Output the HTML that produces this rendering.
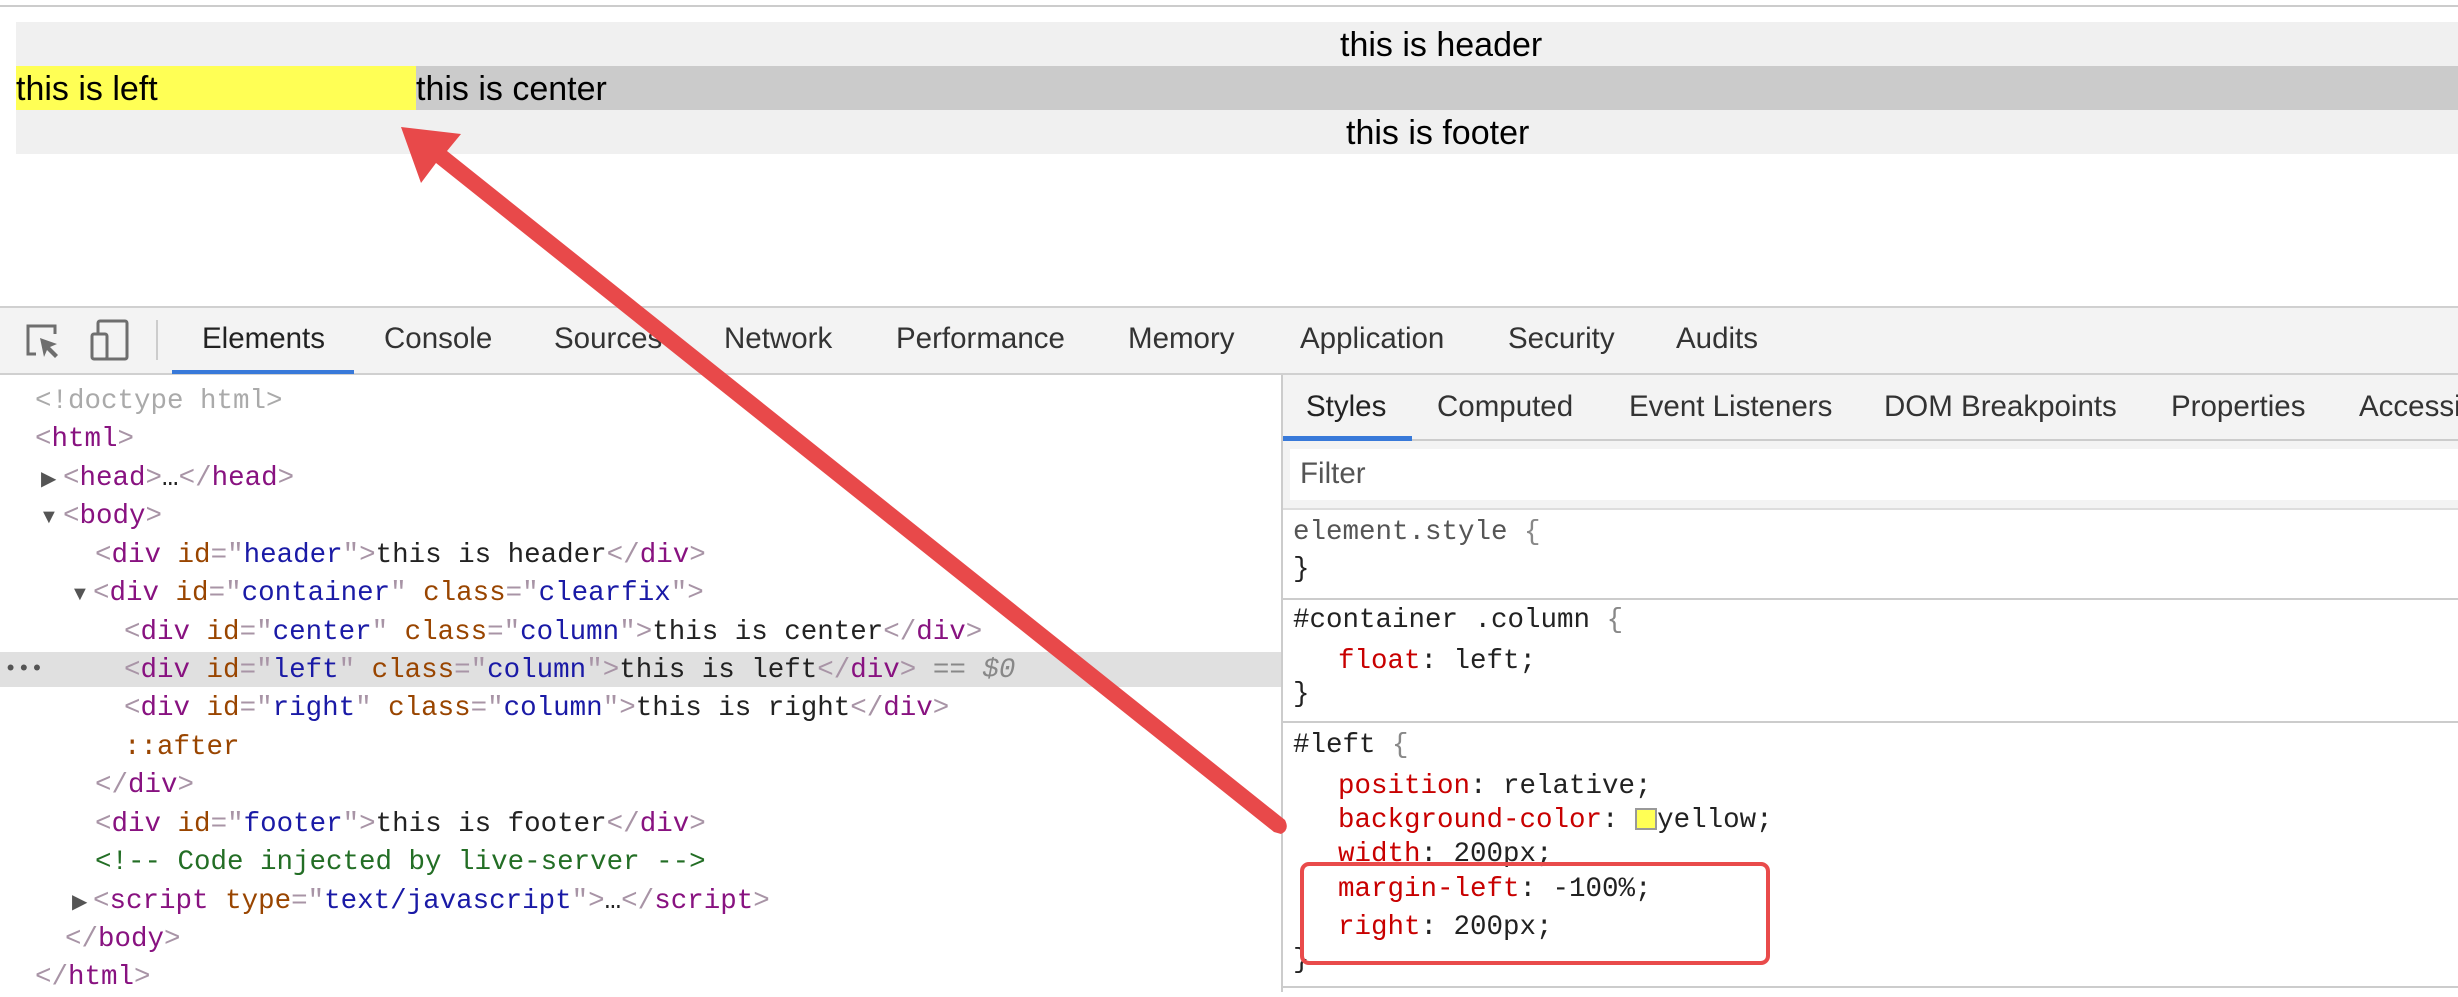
<!DOCTYPE html>
<html><head><meta charset="utf-8">
<style>
*{margin:0;padding:0;box-sizing:border-box}
body{width:2458px;height:992px;overflow:hidden;background:#fff;position:relative;font-family:"Liberation Sans",sans-serif}
.a{position:absolute;white-space:pre}
.m{font-family:"Liberation Mono","DejaVu Sans Mono",monospace;font-size:27.5px;line-height:38px;color:#222}
.t{color:#881280}.b{color:#a894a6}.n{color:#994500}.v{color:#1a1aa6}.c{color:#236e25}.g{color:#aaa}.p{color:#c80000}.k{color:#888}
.tab{position:absolute;font-size:29.5px;color:#333;top:321px;line-height:36px}
.st{position:absolute;font-size:29.5px;color:#333;top:389px;line-height:36px}
.ar{position:absolute;font-size:20px;color:#555;line-height:38px}
.pg{position:absolute;font-size:34px;line-height:44px;color:#000;white-space:pre}
</style></head><body>
<div class="a" style="left:0;top:5px;width:2458px;height:2px;background:#ccc"></div>
<div class="a" style="left:16px;top:22px;width:2442px;height:44px;background:#f0f0f0"></div>
<div class="a" style="left:16px;top:66px;width:2442px;height:44px;background:#cbcbcb"></div>
<div class="a" style="left:16px;top:66px;width:400px;height:44px;background:#ffff55"></div>
<div class="a" style="left:16px;top:110px;width:2442px;height:44px;background:#f0f0f0"></div>
<div class="pg" style="left:1340px;top:23px">this is header</div>
<div class="pg" style="left:16px;top:67px">this is left</div>
<div class="pg" style="left:416px;top:67px">this is center</div>
<div class="pg" style="left:1346px;top:111px">this is footer</div>

<div class="a" style="left:0;top:306px;width:2458px;height:69px;background:#f3f3f3;border-top:2px solid #d0d0d0;border-bottom:2px solid #d0d0d0"></div>
<svg class="a" style="left:0;top:306px" width="170" height="69" viewBox="0 306 170 69">
<path d="M36 354 H28 V326 H55 V334" fill="none" stroke="#6e6e6e" stroke-width="3"/>
<path d="M40 338 L57 344 L50 347 L58 355 L55 358 L47 350 L44 357 Z" fill="#6e6e6e"/>
<rect x="98" y="321" width="29" height="38" rx="2" fill="none" stroke="#6e6e6e" stroke-width="3"/>
<rect x="92" y="334" width="15" height="25" rx="2" fill="#f3f3f3" stroke="#6e6e6e" stroke-width="3"/>
<rect x="156" y="320" width="2" height="40" fill="#ccc"/>
</svg>
<div class="a" style="left:172px;top:370px;width:182px;height:4px;background:#3879d9"></div>
<div class="tab" style="left:202px;color:#222">Elements</div>
<div class="tab" style="left:384px">Console</div>
<div class="tab" style="left:554px">Sources</div>
<div class="tab" style="left:724px">Network</div>
<div class="tab" style="left:896px">Performance</div>
<div class="tab" style="left:1128px">Memory</div>
<div class="tab" style="left:1300px">Application</div>
<div class="tab" style="left:1508px">Security</div>
<div class="tab" style="left:1676px">Audits</div>

<div class="a" style="left:0;top:652px;width:1281px;height:35px;background:#e0e0e0"></div>
<div class="a m" style="left:4px;top:651px;font-size:22px;color:#555">•••</div>

<div class="a m" style="left:35px;top:383px"><span class="g">&lt;!doctype html&gt;</span></div>
<div class="a m" style="left:35px;top:421px"><span class="b">&lt;</span><span class="t">html</span><span class="b">&gt;</span></div>
<div class="ar" style="left:41px;top:460px">▶</div>
<div class="a m" style="left:63px;top:460px"><span class="b">&lt;</span><span class="t">head</span><span class="b">&gt;</span>…<span class="b">&lt;/</span><span class="t">head</span><span class="b">&gt;</span></div>
<div class="ar" style="left:39px;top:498px">▼</div>
<div class="a m" style="left:63px;top:498px"><span class="b">&lt;</span><span class="t">body</span><span class="b">&gt;</span></div>
<div class="a m" style="left:95px;top:537px"><span class="b">&lt;</span><span class="t">div</span> <span class="n">id</span><span class="b">="</span><span class="v">header</span><span class="b">"&gt;</span>this is header<span class="b">&lt;/</span><span class="t">div</span><span class="b">&gt;</span></div>
<div class="ar" style="left:70px;top:575px">▼</div>
<div class="a m" style="left:93px;top:575px"><span class="b">&lt;</span><span class="t">div</span> <span class="n">id</span><span class="b">="</span><span class="v">container</span><span class="b">"</span> <span class="n">class</span><span class="b">="</span><span class="v">clearfix</span><span class="b">"&gt;</span></div>
<div class="a m" style="left:124px;top:614px"><span class="b">&lt;</span><span class="t">div</span> <span class="n">id</span><span class="b">="</span><span class="v">center</span><span class="b">"</span> <span class="n">class</span><span class="b">="</span><span class="v">column</span><span class="b">"&gt;</span>this is center<span class="b">&lt;/</span><span class="t">div</span><span class="b">&gt;</span></div>
<div class="a m" style="left:124px;top:652px"><span class="b">&lt;</span><span class="t">div</span> <span class="n">id</span><span class="b">="</span><span class="v">left</span><span class="b">"</span> <span class="n">class</span><span class="b">="</span><span class="v">column</span><span class="b">"&gt;</span>this is left<span class="b">&lt;/</span><span class="t">div</span><span class="b">&gt;</span> <span class="k">== <i>$0</i></span></div>
<div class="a m" style="left:124px;top:690px"><span class="b">&lt;</span><span class="t">div</span> <span class="n">id</span><span class="b">="</span><span class="v">right</span><span class="b">"</span> <span class="n">class</span><span class="b">="</span><span class="v">column</span><span class="b">"&gt;</span>this is right<span class="b">&lt;/</span><span class="t">div</span><span class="b">&gt;</span></div>
<div class="a m" style="left:124px;top:729px"><span class="n">::after</span></div>
<div class="a m" style="left:95px;top:767px"><span class="b">&lt;/</span><span class="t">div</span><span class="b">&gt;</span></div>
<div class="a m" style="left:95px;top:806px"><span class="b">&lt;</span><span class="t">div</span> <span class="n">id</span><span class="b">="</span><span class="v">footer</span><span class="b">"&gt;</span>this is footer<span class="b">&lt;/</span><span class="t">div</span><span class="b">&gt;</span></div>
<div class="a m" style="left:95px;top:844px"><span class="c">&lt;!-- Code injected by live-server --&gt;</span></div>
<div class="ar" style="left:72px;top:883px">▶</div>
<div class="a m" style="left:93px;top:883px"><span class="b">&lt;</span><span class="t">script</span> <span class="n">type</span><span class="b">="</span><span class="v">text/javascript</span><span class="b">"&gt;</span>…<span class="b">&lt;/</span><span class="t">script</span><span class="b">&gt;</span></div>
<div class="a m" style="left:65px;top:921px"><span class="b">&lt;/</span><span class="t">body</span><span class="b">&gt;</span></div>
<div class="a m" style="left:35px;top:959px"><span class="b">&lt;/</span><span class="t">html</span><span class="b">&gt;</span></div>

<div class="a" style="left:1281px;top:375px;width:2px;height:617px;background:#ccc"></div>
<div class="a" style="left:1283px;top:375px;width:1175px;height:66px;background:#f3f3f3;border-bottom:2px solid #ccc"></div>
<div class="a" style="left:1283px;top:436px;width:129px;height:5px;background:#3879d9"></div>
<div class="st" style="left:1306px;color:#222">Styles</div>
<div class="st" style="left:1437px">Computed</div>
<div class="st" style="left:1629px">Event Listeners</div>
<div class="st" style="left:1884px">DOM Breakpoints</div>
<div class="st" style="left:2171px">Properties</div>
<div class="st" style="left:2359px">Accessibility</div>
<div class="a" style="left:1283px;top:441px;width:1175px;height:69px;background:#f3f3f3;border-bottom:2px solid #ddd"></div>
<div class="a" style="left:1290px;top:449px;width:1168px;height:51px;background:#fff"></div>
<div class="a" style="left:1300px;top:456px;font-size:29.5px;line-height:36px;color:#555">Filter</div>
<div class="a m" style="left:1293px;top:514px;color:#555">element.style <span class="k">{</span></div>
<div class="a m" style="left:1293px;top:551px">}</div>
<div class="a" style="left:1283px;top:598px;width:1175px;height:2px;background:#ccc"></div>
<div class="a m" style="left:1293px;top:602px">#container .column <span class="k">{</span></div>
<div class="a m" style="left:1338px;top:643px"><span class="p">float</span>: left;</div>
<div class="a m" style="left:1293px;top:676px">}</div>
<div class="a" style="left:1283px;top:721px;width:1175px;height:2px;background:#ccc"></div>
<div class="a m" style="left:1293px;top:727px">#left <span class="k">{</span></div>
<div class="a m" style="left:1338px;top:768px"><span class="p">position</span>: relative;</div>
<div class="a m" style="left:1338px;top:802px"><span class="p">background-color</span>: <span style="display:inline-block;width:22px;height:22px;background:#ffff55;border:2px solid #999;vertical-align:-3px"></span>yellow;</div>
<div class="a m" style="left:1338px;top:836px"><span class="p">width</span>: 200px;</div>
<div class="a m" style="left:1338px;top:871px"><span class="p">margin-left</span>: -100%;</div>
<div class="a m" style="left:1338px;top:909px"><span class="p">right</span>: 200px;</div>
<div class="a m" style="left:1293px;top:942px">}</div>
<div class="a" style="left:1283px;top:986px;width:1175px;height:2px;background:#ccc"></div>
<div class="a" style="left:1300px;top:862px;width:470px;height:103px;border:4px solid #e94b4b;border-radius:9px"></div>

<svg class="a" style="left:0;top:0" width="2458" height="992">
<path d="M401 127 L461 134 L447 151 L1285 820 Q1290 830 1281 834 L1274 832 L436 163 L421 183 Z" fill="#e8494a"/>
</svg>
</body></html>
